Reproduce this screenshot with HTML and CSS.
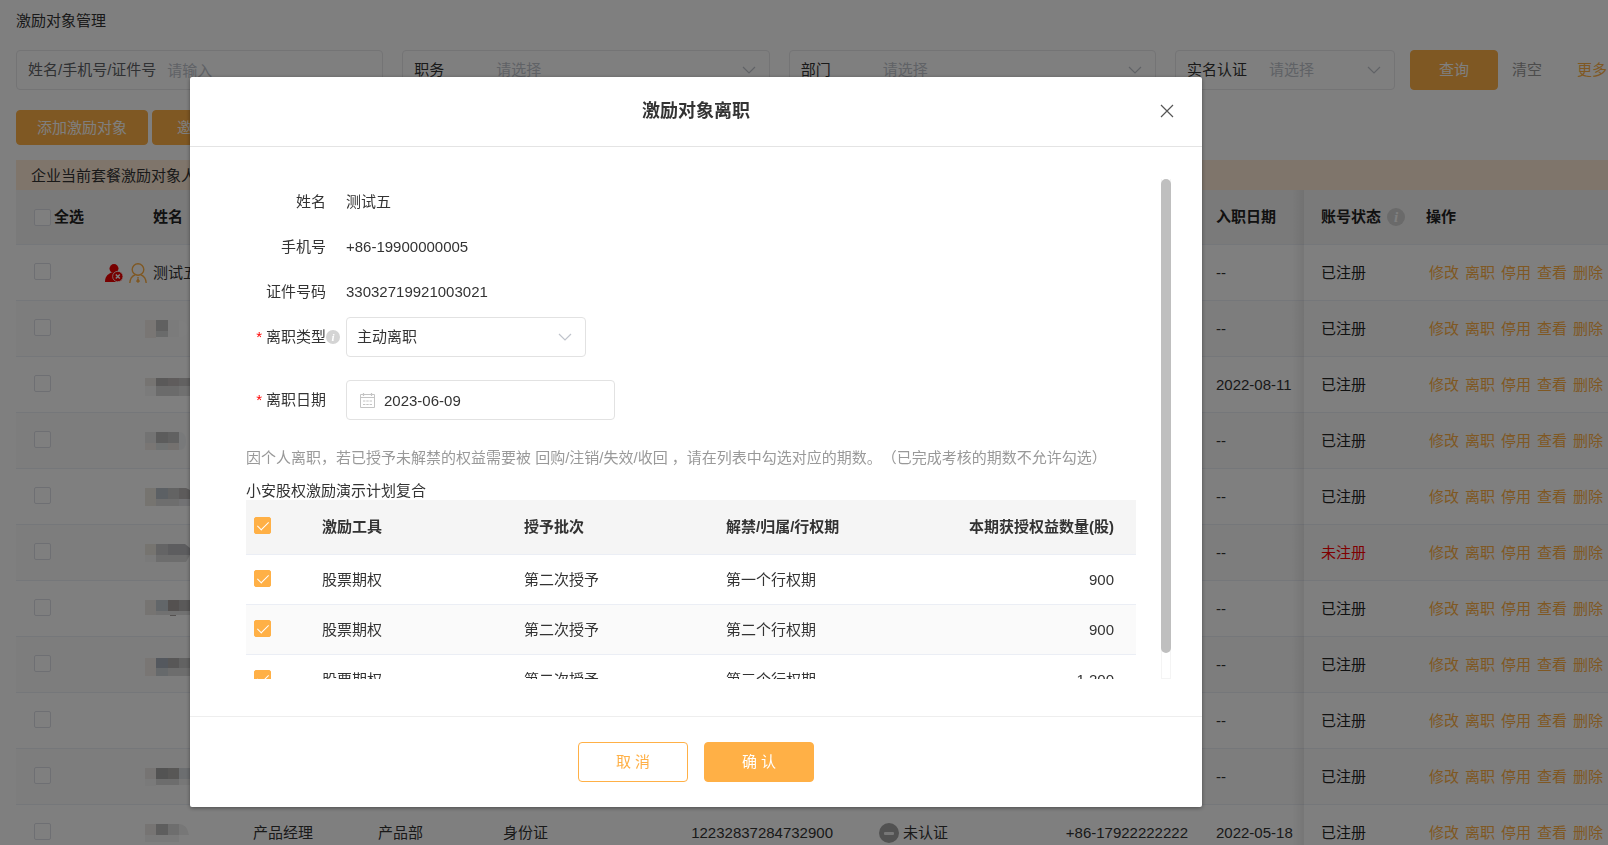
FILE: index.html
```html
<!DOCTYPE html>
<html lang="zh-CN">
<head>
<meta charset="utf-8">
<title>激励对象管理</title>
<link rel="stylesheet" href="styles.css">
</head>
<body>
<svg class="sprite" aria-hidden="true">
  <symbol id="chevron" viewBox="0 0 14 8"><path d="M1 1l6 6 6-6" fill="none" stroke="currentColor" stroke-width="1.2"/></symbol>
</svg>
<main class="page">
  <h1 class="page-title">激励对象管理</h1>
  <form class="filters">
    <div class="filter"><label class="filter-label muted" for="kw">姓名/手机号/证件号</label><input id="kw" class="filter-input" type="text" placeholder="请输入"></div>
    <div class="filter"><label class="filter-label fixed" for="job">职务</label><select id="job" class="filter-select"><option>请选择</option></select><svg class="chevron"><use href="#chevron"/></svg></div>
    <div class="filter"><label class="filter-label fixed" for="dept">部门</label><select id="dept" class="filter-select"><option>请选择</option></select><svg class="chevron"><use href="#chevron"/></svg></div>
    <div class="filter narrow"><label class="filter-label fixed" for="auth">实名认证</label><select id="auth" class="filter-select"><option>请选择</option></select><svg class="chevron"><use href="#chevron"/></svg></div>
    <div class="filter-actions">
      <button type="button" class="btn btn-search">查询</button>
      <button type="button" class="text-btn clear">清空</button>
      <button type="button" class="text-btn more">更多</button>
    </div>
  </form>
  <div class="toolbar">
    <button type="button" class="btn btn-tool">添加激励对象</button>
    <button type="button" class="btn btn-tool wide">邀请注册</button>
  </div>
  <p class="notice">企业当前套餐激励对象人数</p>
  <table class="list">
    <colgroup><col class="w-check"><col class="w-name"><col class="w-text"><col class="w-text"><col class="w-text"><col class="w-id"><col><col class="w-phone"><col class="w-date"><col class="w-status"><col class="w-ops"></colgroup>
    <thead>
      <tr><th class="check"><label class="all"><input type="checkbox" class="box">全选</label></th><th class="name">姓名</th><th></th><th></th><th></th><th></th><th></th><th></th><th>入职日期</th><th class="status"><span class="status-head">账号状态<span class="info info-lg">i</span></span></th><th>操作</th></tr>
    </thead>
    <tbody>
      <tr><td class="check"><input type="checkbox" class="box" aria-label="选择"></td>
        <td class="person"><span class="person-row">
          <svg class="ico-left" viewBox="0 0 18 18"><circle cx="9" cy="4.600" r="4.500" fill="#f00000"/><path d="M0 18c0-5 2-7.500 6.500-9.500h5L13 18z" fill="#f00000"/><circle cx="12.800" cy="12.500" r="5.200" fill="#f00000" stroke="#fff" stroke-width=".8"/><path d="M10.800 10.500l4 4m0-4l-4 4" stroke="#fff" stroke-width="1.500"/></svg>
          <svg class="ico-user" viewBox="0 0 18 20" fill="none" stroke="#ffb046" stroke-width="1.400"><circle cx="9" cy="6.500" r="5.800"/><path d="M.8 20c.2-4 1.700-6.800 5.200-8.200M17.200 20c-.2-4-1.700-6.800-5.200-8.200"/><path d="M8.200 14h1.600l-.3 1.800 1.500 2.400-2 1.800-2-1.800 1.500-2.400z" fill="#ffb046" stroke="none"/></svg>
          测试五</span></td>
        <td></td><td></td><td></td><td></td><td></td><td></td><td>--</td><td class="status">已注册</td><td><span class="ops"><a href="#">修改</a><a href="#">离职</a><a href="#">停用</a><a href="#">查看</a><a href="#">删除</a></span></td></tr>
      <tr><td class="check"><input type="checkbox" class="box" aria-label="选择"></td>
        <td class="masked"><svg class="mask" viewBox="0 0 45 18"><path fill="#f2ede8" d="M0 0h11v18H0z"/><path fill="#c0c0c0" d="M11 0h12v11H11z"/><path fill="#d4d6d6" d="M11 11h12v6H11z"/><path fill="#f6f6f6" d="M23 0h11v17H23z"/><path fill="#fdfdfd" d="M34 1q9 0 9 8t-9 8z"/></svg></td>
        <td></td><td></td><td></td><td></td><td></td><td></td><td>--</td><td class="status">已注册</td><td><span class="ops"><a href="#">修改</a><a href="#">离职</a><a href="#">停用</a><a href="#">查看</a><a href="#">删除</a></span></td></tr>
      <tr><td class="check"><input type="checkbox" class="box" aria-label="选择"></td>
        <td class="masked"><svg class="mask" viewBox="0 0 45 18"><path fill="#ece8e4" d="M0 2h11v8H0z"/><path fill="#f6f6f6" d="M0 10h11v10H0z"/><path fill="#b4b2b2" d="M11 2h12v8H11z"/><path fill="#beb8b8" d="M23 2h11v8H23z"/><path fill="#c4c2c2" d="M34 2h11v8H34z"/><path fill="#d6d6d6" d="M11 10h23v10H11z"/><path fill="#e0e0e0" d="M34 10h11v10H34z"/></svg></td>
        <td></td><td></td><td></td><td></td><td></td><td></td><td>2022-08-11</td><td class="status">已注册</td><td><span class="ops"><a href="#">修改</a><a href="#">离职</a><a href="#">停用</a><a href="#">查看</a><a href="#">删除</a></span></td></tr>
      <tr><td class="check"><input type="checkbox" class="box" aria-label="选择"></td>
        <td class="masked"><svg class="mask" viewBox="0 0 45 18"><path fill="#e6e6e6" d="M0 0h11v11H0z"/><path fill="#f2ede8" d="M0 11h11v7H0z"/><path fill="#b8b8b8" d="M11 0h12v11H11z"/><path fill="#c2c2c2" d="M23 0h11v11H23z"/><path fill="#e0e4e4" d="M11 11h12v7H11z"/><path fill="#e8e2de" d="M23 11h11v7H23z"/><path fill="#f0f2f4" d="M34 0q7 0 7 9t-7 9z"/></svg></td>
        <td></td><td></td><td></td><td></td><td></td><td></td><td>--</td><td class="status">已注册</td><td><span class="ops"><a href="#">修改</a><a href="#">离职</a><a href="#">停用</a><a href="#">查看</a><a href="#">删除</a></span></td></tr>
      <tr><td class="check"><input type="checkbox" class="box" aria-label="选择"></td>
        <td class="masked"><svg class="mask" viewBox="0 0 45 18"><path fill="#ece8e0" d="M0 0h11v18H0z"/><path fill="#b8c0c8" d="M11 0h12v11H11z"/><path fill="#c6c6c6" d="M23 0h11v11H23z"/><path fill="#bab6b6" d="M34 0h7l4 2v9H34z"/><path fill="#dcdcdc" d="M11 11h23v7H11z"/><path fill="#e4e4e8" d="M34 11h11v7H34z"/></svg></td>
        <td></td><td></td><td></td><td></td><td></td><td></td><td>--</td><td class="status">已注册</td><td><span class="ops"><a href="#">修改</a><a href="#">离职</a><a href="#">停用</a><a href="#">查看</a><a href="#">删除</a></span></td></tr>
      <tr><td class="check"><input type="checkbox" class="box" aria-label="选择"></td>
        <td class="masked"><svg class="mask" viewBox="0 0 45 18"><path fill="#ece8e0" d="M0 0h11v11H0z"/><path fill="#f4f4f4" d="M0 11h11v7H0z"/><path fill="#c8c8ca" d="M11 0h12v11H11z"/><path fill="#bababe" d="M23 0h17l5 4v7H23z"/><path fill="#dadada" d="M11 11h34l-4 7H11z"/></svg></td>
        <td></td><td></td><td></td><td></td><td></td><td></td><td>--</td><td class="status danger">未注册</td><td><span class="ops"><a href="#">修改</a><a href="#">离职</a><a href="#">停用</a><a href="#">查看</a><a href="#">删除</a></span></td></tr>
      <tr><td class="check"><input type="checkbox" class="box" aria-label="选择"></td>
        <td class="masked"><svg class="mask" viewBox="0 0 45 18"><path fill="#ece8e4" d="M0 0h11v15H0z"/><path fill="#c4ccd2" d="M11 0h12v11H11z"/><path fill="#a8a2a0" d="M23 0h11v11H23z"/><path fill="#b4b2b2" d="M34 0h11v11H34z"/><path fill="#e2e2e2" d="M11 11h34v4H11z"/><path fill="#a8a2a0" d="M25 15h6v1h-6z"/></svg></td>
        <td></td><td></td><td></td><td></td><td></td><td></td><td>--</td><td class="status">已注册</td><td><span class="ops"><a href="#">修改</a><a href="#">离职</a><a href="#">停用</a><a href="#">查看</a><a href="#">删除</a></span></td></tr>
      <tr><td class="check"><input type="checkbox" class="box" aria-label="选择"></td>
        <td class="masked"><svg class="mask" viewBox="0 0 45 18"><path fill="#f2ede8" d="M0 2h11v18H0z"/><path fill="#a8b0bc" d="M11 2h12v10H11z"/><path fill="#b0aeae" d="M23 2h11v10H23z"/><path fill="#c4c4c4" d="M34 2h11v10H34z"/><path fill="#ccd2d6" d="M11 12h12v8H11z"/><path fill="#dadada" d="M23 12h22v8H23z"/></svg></td>
        <td></td><td></td><td></td><td></td><td></td><td></td><td>--</td><td class="status">已注册</td><td><span class="ops"><a href="#">修改</a><a href="#">离职</a><a href="#">停用</a><a href="#">查看</a><a href="#">删除</a></span></td></tr>
      <tr><td class="check"><input type="checkbox" class="box" aria-label="选择"></td>
        <td></td>
        <td></td><td></td><td></td><td></td><td></td><td></td><td>--</td><td class="status">已注册</td><td><span class="ops"><a href="#">修改</a><a href="#">离职</a><a href="#">停用</a><a href="#">查看</a><a href="#">删除</a></span></td></tr>
      <tr><td class="check"><input type="checkbox" class="box" aria-label="选择"></td>
        <td class="masked"><svg class="mask" viewBox="0 0 45 18"><path fill="#ece8e6" d="M0 0h11v11H0z"/><path fill="#f4f4f4" d="M0 11h11v7H0z"/><path fill="#a6a6a6" d="M11 0h12v11H11z"/><path fill="#b0aeac" d="M23 0h11v11H23z"/><path fill="#d8dce0" d="M34 0h11v11H34z"/><path fill="#dadada" d="M11 11h23v6H11z"/><path fill="#eee" d="M34 11h11v6H34z"/></svg></td>
        <td></td><td></td><td></td><td></td><td></td><td></td><td>--</td><td class="status">已注册</td><td><span class="ops"><a href="#">修改</a><a href="#">离职</a><a href="#">停用</a><a href="#">查看</a><a href="#">删除</a></span></td></tr>
      <tr><td class="check"><input type="checkbox" class="box" aria-label="选择"></td>
        <td class="masked"><svg class="mask" viewBox="0 0 45 18"><path fill="#ece8e6" d="M0 0h11v11H0z"/><path fill="#bcbcbc" d="M11 0h12v11H11z"/><path fill="#dcdcdc" d="M23 0h11v11H23z"/><path fill="#eee" d="M34 0q8 0 10 11H34z"/><path fill="#f4f4f4" d="M0 11h34v7H0z"/></svg></td>
        <td>产品经理</td><td>产品部</td><td>身份证</td><td class="id-no">12232837284732900</td><td><span class="auth"><svg class="ico-minus" viewBox="0 0 20 20"><circle cx="10" cy="10" r="10" fill="#a4a4a4"/><rect x="5" y="9" width="10" height="3" rx="1" fill="#eee"/></svg>未认证</span></td><td class="phone">+86-17922222222</td><td>2022-05-18</td><td class="status">已注册</td><td><span class="ops"><a href="#">修改</a><a href="#">离职</a><a href="#">停用</a><a href="#">查看</a><a href="#">删除</a></span></td></tr>
    </tbody>
  </table>
</main>

<div class="overlay">
  <section class="dialog" role="dialog" aria-labelledby="dlg-title">
    <header class="dialog-head">
      <h2 id="dlg-title" class="dialog-title">激励对象离职</h2>
      <button type="button" class="close" aria-label="关闭"><svg viewBox="0 0 14 14"><path d="M1 1l12 12M13 1L1 13" stroke="#555" stroke-width="1.200"/></svg></button>
    </header>
    <div class="dialog-body">
      <div class="scroll">
        <dl class="facts">
          <div class="fact"><dt>姓名</dt><dd>测试五</dd></div>
          <div class="fact"><dt>手机号</dt><dd>+86-19900000005</dd></div>
          <div class="fact"><dt>证件号码</dt><dd>33032719921003021</dd></div>
        </dl>
        <div class="field">
          <label class="field-label" for="leave-type"><span class="req">*</span>离职类型</label><span class="field-tip"><span class="info">i</span></span>
          <div class="control type"><select id="leave-type"><option>主动离职</option></select><svg class="chevron"><use href="#chevron"/></svg></div>
        </div>
        <div class="field">
          <label class="field-label" for="leave-date"><span class="req">*</span>离职日期</label><span class="field-tip"></span>
          <div class="control date"><svg class="ico-cal" viewBox="0 0 15 15" fill="none" stroke="#c4c4c4"><path d="M.5 1.500h14v13H.5zM.5 4.500h14"/><path d="M3.500 0v3M11.500 0v3" stroke-width="1.200"/><path d="M3 8h9M3 11.500h9" stroke-dasharray="2.400 .9"/></svg><input id="leave-date" type="text" value="2023-06-09"></div>
        </div>
        <p class="hint">因个人离职，若已授予未解禁的权益需要被 回购/注销/失效/收回 ，请在列表中勾选对应的期数。（已完成考核的期数不允许勾选）</p>
        <p class="plan">小安股权激励演示计划复合</p>
        <table class="grants">
          <colgroup><col class="g-check"><col class="g-tool"><col class="g-batch"><col class="g-term"><col></colgroup>
          <thead><tr><th class="check"><input type="checkbox" class="box" checked aria-label="全选"></th><th>激励工具</th><th>授予批次</th><th>解禁/归属/行权期</th><th class="num">本期获授权益数量(股)</th></tr></thead>
          <tbody>
            <tr><td class="check"><input type="checkbox" class="box" checked aria-label="选择"></td><td>股票期权</td><td>第二次授予</td><td>第一个行权期</td><td class="num">900</td></tr>
            <tr><td class="check"><input type="checkbox" class="box" checked aria-label="选择"></td><td>股票期权</td><td>第二次授予</td><td>第二个行权期</td><td class="num">900</td></tr>
            <tr><td class="check"><input type="checkbox" class="box" checked aria-label="选择"></td><td>股票期权</td><td>第二次授予</td><td>第三个行权期</td><td class="num">1,200</td></tr>
          </tbody>
        </table>
      </div>
      <div class="track"><div class="thumb"></div></div>
    </div>
    <footer class="dialog-foot">
      <button type="button" class="btn btn-dialog plain">取 消</button>
      <button type="button" class="btn btn-dialog">确 认</button>
    </footer>
  </section>
</div>
</body>
</html>
```
FILE: styles.css
```css
* { box-sizing: border-box; }
body {
  margin: 0;
  height: 100vh;
  overflow: hidden;
  background: #fff;
  color: #333;
  font: 15px/20px "Liberation Sans", "Noto Sans CJK SC", sans-serif;
  text-spacing-trim: space-all;
}
h1, h2, p, dl, dd { margin: 0; }
button, input, select { font: inherit; color: inherit; }
button { cursor: pointer; }
a { color: #ffb046; text-decoration: none; }
.sprite { display: none; }

.btn {
  border: 1px solid #ffb046;
  border-radius: 4px;
  background: #ffb046;
  color: #fff;
  padding: 0;
}
.text-btn { border: 0; padding: 0; background: none; }
.chevron { width: 14px; height: 8px; flex: none; color: #c0c4cc; }
.box {
  appearance: none;
  display: block;
  flex: none;
  width: 17px;
  height: 17px;
  margin: 0;
  border: 1px solid #dcdfe6;
  border-radius: 2px;
  background: #fff;
}
.box:checked { border-color: #ffb046; background: #ffb046; }
.box:checked::after {
  content: "";
  display: block;
  width: 5px;
  height: 10px;
  margin: 1px 0 0 5px;
  border: solid #fff;
  border-width: 0 1px 1px 0;
  transform: rotate(45deg);
}
.info {
  display: inline-block;
  width: 14px;
  height: 14px;
  border-radius: 50%;
  background: #d4d4d4;
  color: #fff;
  text-align: center;
  font: italic bold 11px/14px "Liberation Serif", serif;
}
.info-lg { width: 18px; height: 18px; font-size: 15px; line-height: 18px; }

.page { padding: 11px 0 0 16px; }
.page-title { font-size: 15px; font-weight: 400; line-height: 20px; }
.filters { display: flex; gap: 19px; margin-top: 19px; padding-right: 1px; }
.filter {
  display: flex;
  align-items: center;
  flex: 1;
  min-width: 0;
  height: 40px;
  padding: 0 13px 0 11px;
  border: 1px solid #e8e8ea;
  border-radius: 4px;
}
.filter.narrow { flex: 0 0 220px; }
.filter-label { flex: none; }
.filter-label.fixed { width: 82px; }
.filter-label.muted { color: #606266; margin-right: 11px; }
.filter-input, .filter-select {
  appearance: none;
  flex: 1;
  min-width: 0;
  height: 30px;
  padding: 0;
  border: 0;
  outline: 0;
  background: none;
  color: #c0c4cc;
}
.filter-input::placeholder { color: #c0c4cc; }
.filter-actions { display: flex; align-items: center; margin-left: -4px; }
.btn-search { width: 88px; height: 40px; }
.clear { margin-left: 14px; color: #999; }
.more { margin-left: 35px; color: #ffb046; }
.toolbar { display: flex; gap: 4px; margin-top: 20px; }
.btn-tool { height: 35px; padding: 0 20px; }
.btn-tool.wide { padding: 0 24px; }
.notice { margin-top: 15px; padding: 6px 15px 4px; background: #ffebd7; }

.list, .grants { width: 100%; table-layout: fixed; border-spacing: 0; }
.list th, .list td { height: 56px; padding: 0 0 0 16px; border-bottom: 1px solid #ebeef5; text-align: left; white-space: nowrap; }
.list th { height: 55px; background: #f5f5f5; }
.list tbody tr:nth-child(even) { background: #fafafa; }
.list th, .list td.status { color: #222; }
.w-check { width: 88px; }
.w-name { width: 133px; }
.w-text { width: 125px; }
.w-id { width: 251px; }
.w-phone { width: 160px; }
.w-date { width: 104px; }
.w-status { width: 106px; }
.w-ops { width: 198px; }
.list .check { padding: 0 0 3px 18px; }
.list th.check { padding-bottom: 0; }
.all { display: flex; align-items: center; gap: 3px; }
.list .name { padding-left: 49px; }
.list .masked { padding-left: 41px; }
.list .person { padding-left: 1px; }
.person-row, .auth, .status-head { display: flex; align-items: center; }
.ico-left { width: 18px; height: 18px; margin-right: 6px; }
.ico-user { width: 18px; height: 20px; margin-right: 6px; }
.mask { display: block; width: 45px; height: 18px; overflow: visible; }
.list .id-no { padding-right: 30px; text-align: right; }
.list .phone { padding-right: 12px; text-align: right; }
.ico-minus { width: 20px; height: 20px; margin-right: 4px; }
.list .status { position: relative; padding-left: 17px; }
.status::before {
  content: "";
  position: absolute;
  top: 0;
  bottom: -1px;
  left: -12px;
  width: 12px;
  background: linear-gradient(to right, rgba(0, 0, 0, 0), rgba(0, 0, 0, .07));
}
.status-head { gap: 6px; }
.list .status.danger { color: #f00; }
.ops { display: flex; gap: 6px; padding-left: 3px; }

.overlay { position: fixed; inset: 0; padding: 77px 406px 0 190px; background: rgba(0, 0, 0, .5); }
.dialog { background: #fff; border-radius: 2px; box-shadow: 0 1px 4px rgba(0, 0, 0, .4); }
.dialog-head {
  display: grid;
  grid-template-columns: 1fr auto 1fr;
  align-items: center;
  height: 70px;
  padding: 0 28px 2px;
  border-bottom: 1px solid #e4e4e4;
}
.dialog-title { grid-column: 2; font-size: 18px; line-height: 24px; }
.close { justify-self: end; width: 14px; height: 14px; padding: 0; border: 0; background: none; }
.close svg { display: block; }
.dialog-body { display: flex; gap: 25px; height: 569px; padding: 32px 31px 37px 56px; }
.scroll { flex: 1; min-width: 0; overflow: hidden; }
.track { width: 10px; border: solid #f4f4f4; border-width: 0 1px 1px; }
.thumb { height: 95%; margin: 0 -1px; border-radius: 5px; background: #bfbfbf; }
.fact { display: flex; gap: 20px; line-height: 45px; }
.fact dt { width: 80px; text-align: right; }
.field { display: flex; align-items: center; margin-bottom: 23px; }
.facts { margin-bottom: 3px; }
.field-label { width: 80px; text-align: right; }
.field-tip { display: flex; width: 20px; }
.req { margin-right: 4px; color: #f00; }
.control { display: flex; align-items: center; height: 40px; padding: 0 13px 0 10px; border: 1px solid #e2e2e2; border-radius: 4px; }
.control.type { width: 240px; }
.control.date { width: 269px; padding-left: 13px; }
.control select, .control input { appearance: none; flex: 1; min-width: 0; height: 30px; padding: 0; border: 0; outline: 0; background: none; }
.ico-cal { flex: none; width: 15px; height: 15px; margin-right: 9px; }
.hint { margin-top: 28px; color: #999; white-space: nowrap; }
.plan { padding-top: 13px; line-height: 19px; }
.grants th, .grants td { height: 50px; padding: 0; border-bottom: 1px solid #ebeef5; text-align: left; }
.grants th { height: 55px; background: #f5f5f5; }
.grants tbody tr:nth-child(even) { background: #fafafa; }
.grants .check { padding: 0 0 2px 8px; }
.grants th.check { padding-bottom: 4px; }
.grants .num { padding-right: 22px; text-align: right; }
.g-check { width: 76px; }
.g-tool { width: 202px; }
.g-batch { width: 202px; }
.g-term { width: 200px; }
.dialog-foot { display: flex; justify-content: center; gap: 16px; padding: 25px 0; border-top: 1px solid #eee; }
.btn-dialog { width: 110px; height: 40px; }
.btn-dialog.plain { background: #fff; color: #ffb046; }
```
